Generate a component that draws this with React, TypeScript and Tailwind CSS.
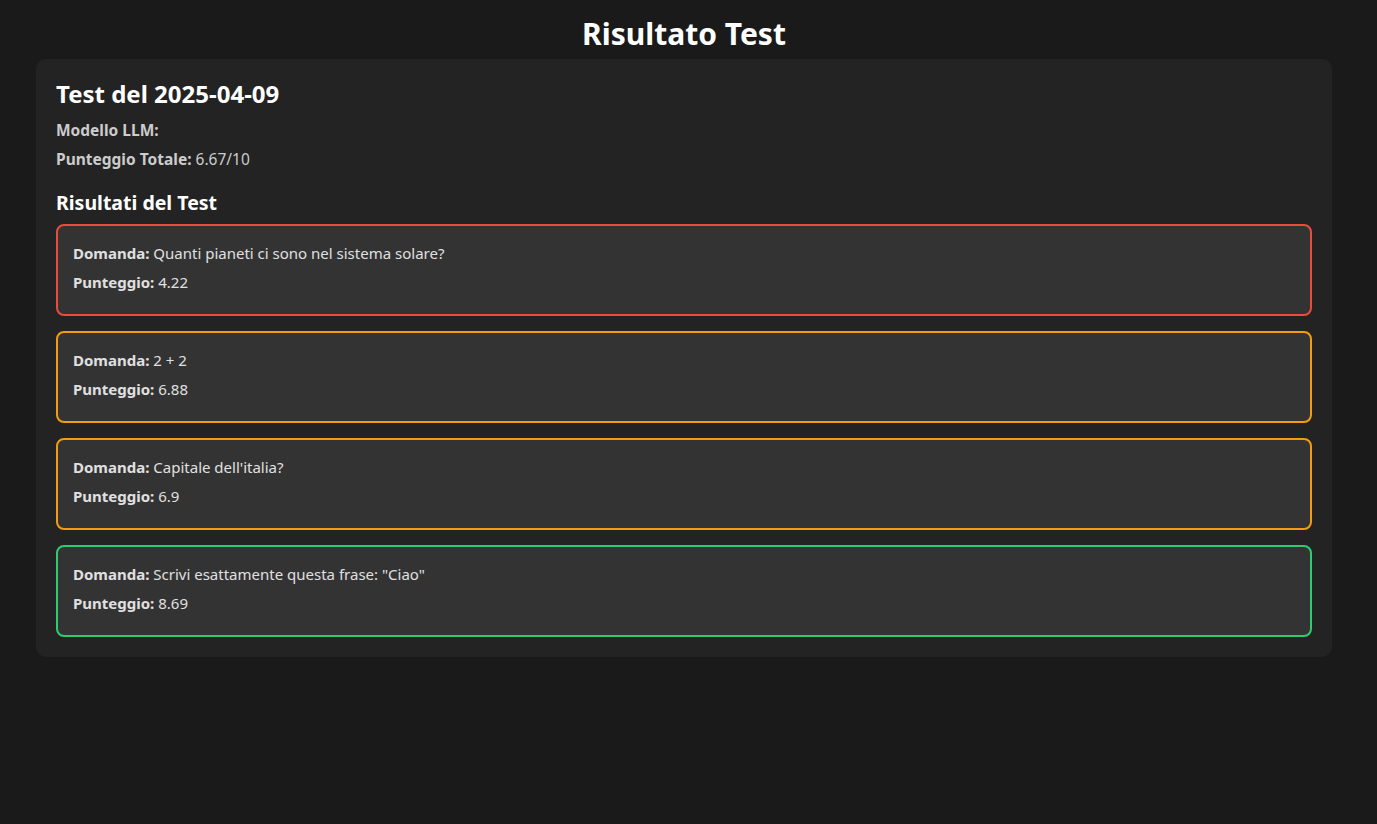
const results = [
  { q: 'Quanti pianeti ci sono nel sistema solare?', score: 4.22, border: 'border-[#e74c3c]' },
  { q: '2 + 2', score: 6.88, border: 'border-[#f39c12]' },
  { q: "Capitale dell'italia?", score: 6.9, border: 'border-[#f39c12]' },
  { q: 'Scrivi esattamente questa frase: "Ciao"', score: 8.69, border: 'border-[#2ecc71]' },
];

export default function App() {
  return (
    <div className="min-h-screen bg-[#1a1a1a] pl-[36px] pr-[45px] pt-[14px] pb-10 text-[#e0e0e0] [font-family:'Noto_Sans',sans-serif]">
      <h1 className="text-center text-[30px] font-bold leading-[40px] text-white">Risultato Test</h1>

      <div className="mt-[5px] rounded-[10px] bg-[#232323] px-5 pt-[19px] pb-5">
        <h2 className="text-[24px] font-bold leading-[32px] text-white">Test del 2025-04-09</h2>
        <p className="mt-[10px] text-[15.5px] leading-[21px] text-[#cccccc]">
          <span className="font-bold">Modello LLM:</span>
        </p>
        <p className="mt-[8px] text-[15.5px] leading-[21px] text-[#cccccc]">
          <span className="font-bold">Punteggio Totale:</span> 6.67/10
        </p>

        <h3 className="mt-[20px] text-[19.5px] font-bold leading-[26px] text-white">Risultati del Test</h3>

        <div className="mt-[8px] flex flex-col gap-[15px]">
          {results.map((r) => (
            <div key={r.q} className={`flex flex-col gap-[9px] rounded-[8px] border-2 bg-[#333333] px-[15px] pt-[17px] pb-[22px] ${r.border}`}>
              <p className="text-[15px] leading-[20px]">
                <span className="font-bold">Domanda:</span> {r.q}
              </p>
              <p className="text-[15px] leading-[20px]">
                <span className="font-bold">Punteggio:</span> {r.score}
              </p>
            </div>
          ))}
        </div>
      </div>
    </div>
  );
}
